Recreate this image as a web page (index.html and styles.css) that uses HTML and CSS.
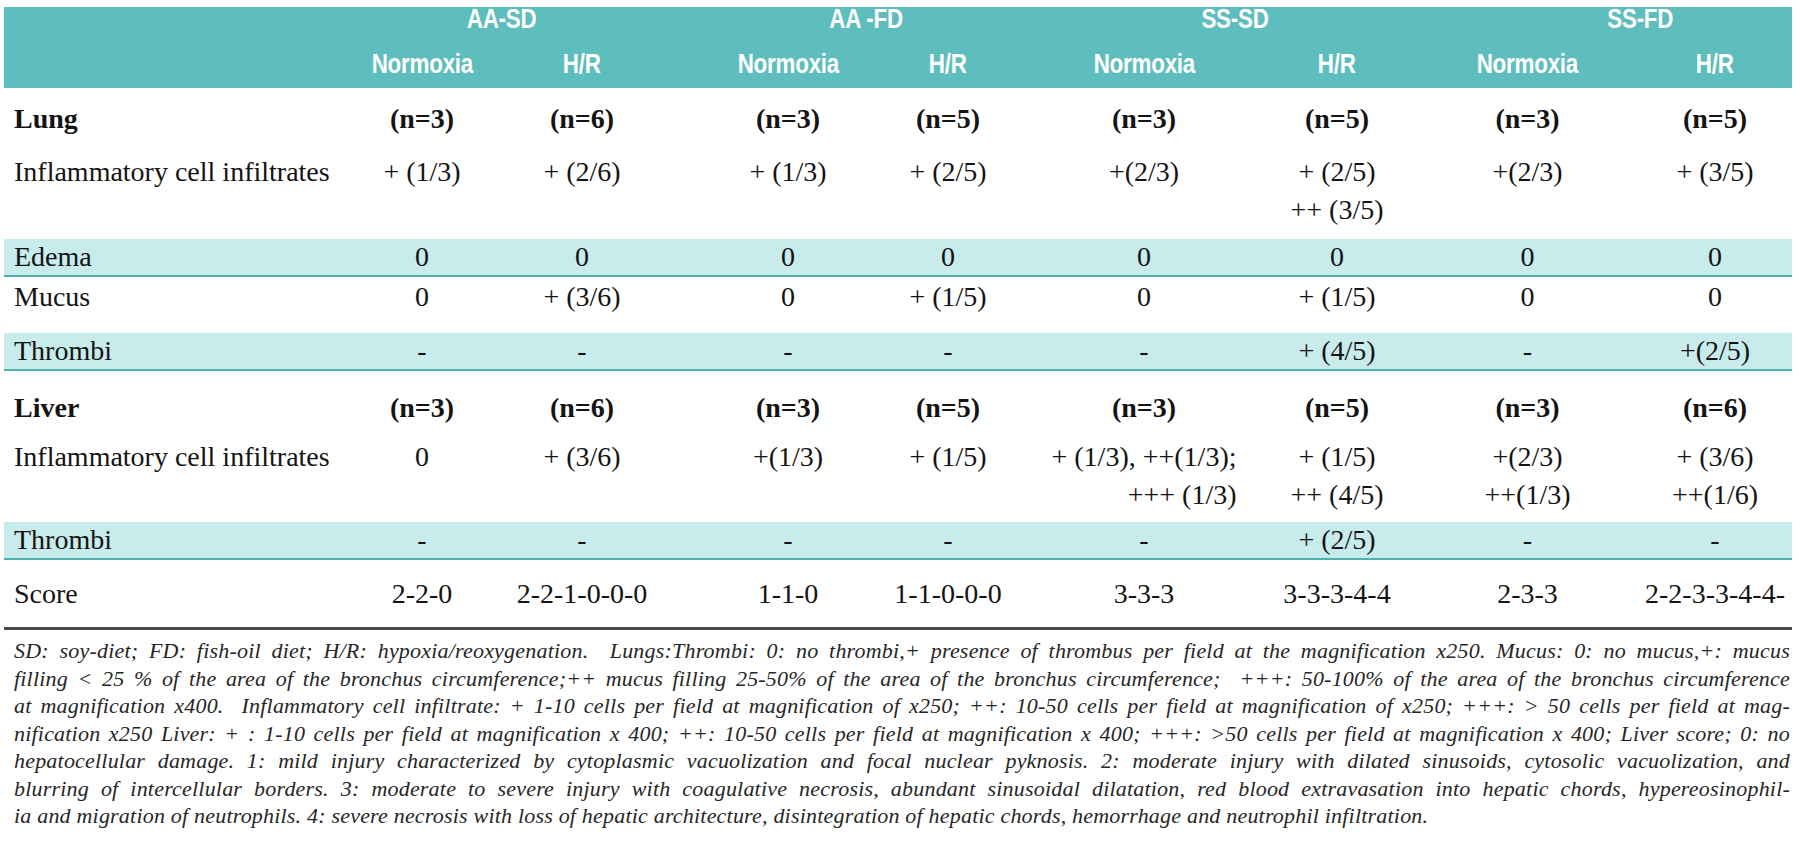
FILE: index.html
```html
<!DOCTYPE html>
<html>
<head>
<meta charset="utf-8">
<link rel="stylesheet" href="styles.css">
</head>
<body>
<div class="page">
  <div class="thead">
    <div class="grid hrow1">
      <div></div>
      <div class="grp g1"><span class="hx">AA-SD</span></div>
      <div class="grp g2"><span class="hx">AA -FD</span></div>
      <div class="grp g3"><span class="hx">SS-SD</span></div>
      <div class="grp g4"><span class="hx">SS-FD</span></div>
    </div>
    <div class="grid hrow2">
      <div></div>
      <div class="c c1"><span class="hx">Normoxia</span></div>
      <div class="c c2"><span class="hx">H/R</span></div>
      <div class="c c3"><span class="hx">Normoxia</span></div>
      <div class="c c4"><span class="hx">H/R</span></div>
      <div class="c c5"><span class="hx">Normoxia</span></div>
      <div class="c c6"><span class="hx">H/R</span></div>
      <div class="c c7"><span class="hx">Normoxia</span></div>
      <div class="c c8"><span class="hx">H/R</span></div>
    </div>
  </div>

  <div class="grid row r-sect1 bold">
    <div class="lbl">Lung</div>
    <div class="c c1">(n=3)</div>
    <div class="c c2">(n=6)</div>
    <div class="c c3">(n=3)</div>
    <div class="c c4">(n=5)</div>
    <div class="c c5">(n=3)</div>
    <div class="c c6">(n=5)</div>
    <div class="c c7">(n=3)</div>
    <div class="c c8">(n=5)</div>
  </div>

  <div class="grid row r-inf1">
    <div class="lbl">Inflammatory cell infiltrates</div>
    <div class="c c1">+ (1/3)</div>
    <div class="c c2">+ (2/6)</div>
    <div class="c c3">+ (1/3)</div>
    <div class="c c4">+ (2/5)</div>
    <div class="c c5">+(2/3)</div>
    <div class="c c6"><span class="ml">+ (2/5)<br>++ (3/5)</span></div>
    <div class="c c7">+(2/3)</div>
    <div class="c c8">+ (3/5)</div>
  </div>

  <div class="grid row band">
    <div class="lbl">Edema</div>
    <div class="c c1">0</div>
    <div class="c c2">0</div>
    <div class="c c3">0</div>
    <div class="c c4">0</div>
    <div class="c c5">0</div>
    <div class="c c6">0</div>
    <div class="c c7">0</div>
    <div class="c c8">0</div>
  </div>

  <div class="grid row r-mucus">
    <div class="lbl">Mucus</div>
    <div class="c c1">0</div>
    <div class="c c2">+ (3/6)</div>
    <div class="c c3">0</div>
    <div class="c c4">+ (1/5)</div>
    <div class="c c5">0</div>
    <div class="c c6">+ (1/5)</div>
    <div class="c c7">0</div>
    <div class="c c8">0</div>
  </div>

  <div class="grid row band">
    <div class="lbl">Thrombi</div>
    <div class="c c1">-</div>
    <div class="c c2">-</div>
    <div class="c c3">-</div>
    <div class="c c4">-</div>
    <div class="c c5">-</div>
    <div class="c c6">+ (4/5)</div>
    <div class="c c7">-</div>
    <div class="c c8">+(2/5)</div>
  </div>

  <div class="grid row r-sect2 bold">
    <div class="lbl">Liver</div>
    <div class="c c1">(n=3)</div>
    <div class="c c2">(n=6)</div>
    <div class="c c3">(n=3)</div>
    <div class="c c4">(n=5)</div>
    <div class="c c5">(n=3)</div>
    <div class="c c6">(n=5)</div>
    <div class="c c7">(n=3)</div>
    <div class="c c8">(n=6)</div>
  </div>

  <div class="grid row r-inf2">
    <div class="lbl">Inflammatory cell infiltrates</div>
    <div class="c c1">0</div>
    <div class="c c2">+ (3/6)</div>
    <div class="c c3">+(1/3)</div>
    <div class="c c4">+ (1/5)</div>
    <div class="c c5"><span class="ml right">+ (1/3), ++(1/3);<br>+++ (1/3)</span></div>
    <div class="c c6"><span class="ml">+ (1/5)<br>++ (4/5)</span></div>
    <div class="c c7"><span class="ml">+(2/3)<br>++(1/3)</span></div>
    <div class="c c8"><span class="ml">+ (3/6)<br>++(1/6)</span></div>
  </div>

  <div class="grid row band">
    <div class="lbl">Thrombi</div>
    <div class="c c1">-</div>
    <div class="c c2">-</div>
    <div class="c c3">-</div>
    <div class="c c4">-</div>
    <div class="c c5">-</div>
    <div class="c c6">+ (2/5)</div>
    <div class="c c7">-</div>
    <div class="c c8">-</div>
  </div>

  <div class="grid row r-score">
    <div class="lbl">Score</div>
    <div class="c c1">2-2-0</div>
    <div class="c c2">2-2-1-0-0-0</div>
    <div class="c c3">1-1-0</div>
    <div class="c c4">1-1-0-0-0</div>
    <div class="c c5">3-3-3</div>
    <div class="c c6">3-3-3-4-4</div>
    <div class="c c7">2-3-3</div>
    <div class="c c8">2-2-3-3-4-4-</div>
  </div>

  <div class="rule"></div>

  <div class="notes">
    <div class="ln">SD: soy-diet; FD: fish-oil diet; H/R: hypoxia/reoxygenation.&nbsp; Lungs:Thrombi: 0: no thrombi,+ presence of thrombus per field at the magnification x250. Mucus: 0: no mucus,+: mucus</div>
    <div class="ln">filling &lt; 25 % of the area of the bronchus circumference;++ mucus filling 25-50% of the area of the bronchus circumference;&nbsp; +++: 50-100% of the area of the bronchus circumference</div>
    <div class="ln">at magnification x400.&nbsp; Inflammatory cell infiltrate: + 1-10 cells per field at magnification of x250; ++: 10-50 cells per field at magnification of x250; +++: &gt; 50 cells per field at mag-</div>
    <div class="ln">nification x250 Liver: + : 1-10 cells per field at magnification x 400; ++: 10-50 cells per field at magnification x 400; +++: &gt;50 cells per field at magnification x 400; Liver score; 0: no</div>
    <div class="ln">hepatocellular damage. 1: mild injury characterized by cytoplasmic vacuolization and focal nuclear pyknosis. 2: moderate injury with dilated sinusoids, cytosolic vacuolization, and</div>
    <div class="ln">blurring of intercellular borders. 3: moderate to severe injury with coagulative necrosis, abundant sinusoidal dilatation, red blood extravasation into hepatic chords, hypereosinophil-</div>
    <div class="ln last">ia and migration of neutrophils. 4: severe necrosis with loss of hepatic architecture, disintegration of hepatic chords, hemorrhage and neutrophil infiltration.</div>
  </div>
</div>
</body>
</html>
```

FILE: styles.css
```css
html, body {
  margin: 0;
  padding: 0;
  background: #ffffff;
}

.page {
  width: 1788px;
  padding: 7px 8px 0 4px;
  font-family: "Liberation Serif", "Times New Roman", serif;
  color: #141414;
}

.grid {
  display: grid;
  grid-template-columns: 338px 160px 183px 183px 179px 194px 192px 189px 170px;
}

/* header */
.thead {
  background: #5ebdbd;
  height: 81px;
  box-sizing: border-box;
  color: #ffffff;
  font-family: "Liberation Sans", Arial, sans-serif;
  font-weight: bold;
  font-size: 28px;
}

.hx {
  display: inline-block;
  transform: scaleX(0.8);
  letter-spacing: -0.3px;
}

.hrow1 {
  height: 24px;
  line-height: 24px;
}

.hrow2 {
  padding-top: 20px;
  line-height: 26px;
}

.grp {
  grid-column: span 2;
  text-align: center;
  white-space: nowrap;
}

.g1 { padding-right: 23px; }
.g3 { padding-right: 10px; }
.g4 { padding-left: 56px; }

/* body rows */
.row {
  font-size: 28px;
  line-height: 38px;
  box-sizing: border-box;
}

.lbl {
  padding-left: 10px;
  white-space: nowrap;
}

.c {
  display: flex;
  justify-content: center;
  white-space: nowrap;
  min-width: 0;
}

.c2 { padding-right: 23px; }
.c3 { padding-left: 23px; }
.c4 { padding-right: 19px; }
.c8 { padding-left: 16px; }

.bold {
  font-weight: bold;
}

.ml {
  display: inline-block;
  text-align: center;
}

.ml.right {
  text-align: right;
}

.r-sect1 {
  height: 60px;
  padding-top: 12px;
}

.r-inf1 {
  height: 91px;
  padding-top: 5px;
}

.band {
  background: #c8ebeb;
  border-bottom: 2px solid #4fb0b0;
  height: 38px;
  line-height: 36px;
}

.r-mucus {
  height: 56px;
  padding-top: 1px;
}

.r-sect2 {
  height: 60px;
  padding-top: 18px;
}

.r-inf2 {
  height: 91px;
  padding-top: 7px;
}

.r-score {
  height: 67px;
  padding-top: 15px;
}

.rule {
  height: 3px;
  background: #4a4a4a;
}

/* footnote */
.notes {
  padding: 7px 2px 0 10px;
  font-style: italic;
  font-size: 22px;
  letter-spacing: 0.2px;
  line-height: 27.5px;
  color: #262626;
}

.ln {
  text-align: justify;
  text-align-last: justify;
}

.ln.last {
  text-align-last: left;
}
```
